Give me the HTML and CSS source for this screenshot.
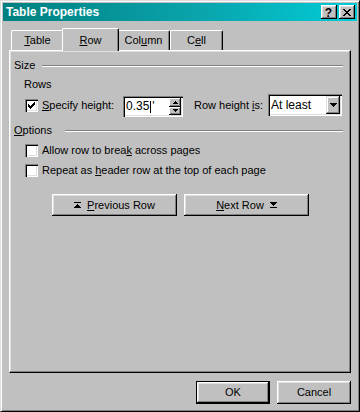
FILE: index.html
```html
<!DOCTYPE html>
<html>
<head>
<meta charset="utf-8">
<link rel="stylesheet" href="styles.css">
</head>
<body>
<div class="window">
  <div class="titlebar">
    <span class="title">Table Properties</span>
    <div class="tb-buttons">
      <span class="tb-btn help">?</span>
      <span class="tb-btn close"><svg width="8" height="7" viewBox="0 0 8 7"><path d="M0 0h2v1H0z M6 0h2v1H6z M1 1h2v1H1z M5 1h2v1H5z M2 2h4v1H2z M3 3h2v1H3z M2 4h4v1H2z M1 5h2v1H1z M5 5h2v1H5z M0 6h2v1H0z M6 6h2v1H6z" fill="#000"/></svg></span>
    </div>
  </div>
  <div class="body">
    <div class="tabs">
      <div class="tab"><u>T</u>able</div>
      <div class="tab active"><u>R</u>ow</div>
      <div class="tab">Col<u>u</u>mn</div>
      <div class="tab">C<u>e</u>ll</div>
    </div>
    <div class="panel">
      <div class="group-head"><span>Size</span><span class="etch"></span></div>
      <div class="sub">Rows</div>
      <div class="height-row">
        <span class="checkbox"><svg width="13" height="13" viewBox="0 0 13 13"><path d="M9 3h1v1H9z M8 4h2v1H8z M3 5h1v1H3z M7 5h3v1H7z M3 6h2v1H3z M6 6h3v1H6z M3 7h5v1H3z M4 8h3v1H4z M5 9h1v1H5z" fill="#000"/></svg></span>
        <span class="lbl lbl-spec"><u>S</u>pecify height:</span>
        <div class="spin">
          <span class="spin-text">0.35<span class="caret"></span>'</span>
          <div class="spin-btns">
            <span class="spin-btn"><svg width="5" height="3" viewBox="0 0 5 3"><path d="M2 0h1v1H2z M1 1h3v1H1z M0 2h5v1H0z" fill="#000"/></svg></span>
            <span class="spin-btn"><svg width="5" height="3" viewBox="0 0 5 3"><path d="M0 0h5v1H0z M1 1h3v1H1z M2 2h1v1H2z" fill="#000"/></svg></span>
          </div>
        </div>
        <span class="lbl lbl-rh">Row height <u>i</u>s:</span>
        <div class="select">
          <span class="select-text">At least</span>
          <span class="drop-btn"><svg width="7" height="4" viewBox="0 0 7 4"><path d="M0 0h7v1H0z M1 1h5v1H1z M2 2h3v1H2z M3 3h1v1H3z" fill="#000"/></svg></span>
        </div>
      </div>
      <div class="group-head opts"><span><u>O</u>ptions</span><span class="etch"></span></div>
      <div class="check-row first">
        <span class="checkbox"></span>
        <span class="lbl">Allow row to brea<u>k</u> across pages</span>
      </div>
      <div class="check-row">
        <span class="checkbox"></span>
        <span class="lbl">Repeat as <u>h</u>eader row at the top of each page</span>
      </div>
      <div class="nav-buttons">
        <div class="btn nav"><svg class="glyph" width="7" height="6" viewBox="0 0 7 6"><path d="M0 0h7v1H0z M3 2h1v1H3z M2 3h3v1H2z M1 4h5v1H1z M0 5h7v1H0z" fill="#000"/></svg><span><u>P</u>revious Row</span></div>
        <div class="btn nav"><span><u>N</u>ext Row</span><svg class="glyph" width="7" height="6" viewBox="0 0 7 6"><path d="M0 0h7v1H0z M1 1h5v1H1z M2 2h3v1H2z M3 3h1v1H3z M0 5h7v1H0z" fill="#000"/></svg></div>
      </div>
    </div>
    <div class="footer">
      <div class="btn dlg default">OK</div>
      <div class="btn dlg">Cancel</div>
    </div>
  </div>
</div>
</body>
</html>
```
FILE: styles.css
```css
* { box-sizing: border-box; }
html, body { margin: 0; padding: 0; background: #c0c0c0; }
body {
  font: 11px/13px "Liberation Sans", Arial, sans-serif;
  color: #000;
  white-space: nowrap;
}
svg { display: block; shape-rendering: crispEdges; }

.window {
  width: 360px;
  height: 412px;
  border: 1px solid;
  border-color: #dfdfdf #000 #000 #dfdfdf;
  box-shadow: inset 1px 1px #fff, inset -1px -1px #808080;
  padding: 2px;
  background: #c0c0c0;
  display: flex;
  flex-direction: column;
}

.titlebar {
  height: 18px;
  display: flex;
  align-items: center;
  justify-content: space-between;
  padding: 0 2px 0 3px;
  background: linear-gradient(to right, #008080 0%, #0aa4ac 55%, #00ccd6 100%);
}
.title { color: #fff; font-weight: bold; font-size: 12px; }
.tb-buttons { display: flex; gap: 2px; }
.tb-btn {
  width: 16px;
  height: 14px;
  background: #c0c0c0;
  box-shadow: inset -1px -1px #000, inset 1px 1px #fff, inset -2px -2px #808080, inset 2px 2px #dfdfdf;
  display: flex;
  align-items: center;
  justify-content: center;
}
.help { font-weight: bold; font-size: 12px; line-height: 12px; padding-top: 1px; padding-right: 1px; }
.close { padding-right: 1px; }

.body {
  flex: 1;
  display: flex;
  flex-direction: column;
  padding: 7px 6px 5px 6px;
}

.tabs {
  display: flex;
  align-items: flex-end;
  height: 22px;
  padding-left: 2px;
  position: relative;
  z-index: 1;
}
.tab {
  width: 53px;
  height: 20px;
  text-align: center;
  padding-top: 3px;
  background: #c0c0c0;
  border-top: 1px solid #fff;
  border-left: 1px solid #fff;
  border-right: 1px solid #000;
  box-shadow: inset -1px 0 #808080;
  border-radius: 2px 2px 0 0;
}
.tab.active {
  width: 57px;
  height: 23px;
  margin: 0 -2px -1px;
  padding-top: 5px;
  position: relative;
  z-index: 2;
}

.panel {
  flex: 1;
  border: 1px solid;
  border-color: #fff #000 #000 #fff;
  box-shadow: inset -1px -1px #808080, inset 1px 1px #dfdfdf;
  padding: 8px 7px 0 4px;
}

.group-head { display: flex; align-items: flex-start; height: 13px; }
.etch {
  flex: 1;
  height: 2px;
  margin-top: 6px;
  margin-left: 7px;
  border-top: 1px solid #808080;
  border-bottom: 1px solid #fff;
}
.group-head.opts { margin-top: 7px; }
.group-head.opts .etch { margin-left: 13px; }

.sub { margin-top: 6px; padding-left: 10px; }

.height-row {
  display: flex;
  align-items: flex-start;
  height: 23px;
  margin-top: 3px;
  padding-left: 11px;
}
.checkbox {
  width: 13px;
  height: 13px;
  flex: none;
  background: #fff;
  box-shadow: inset 1px 1px #808080, inset 2px 2px #000, inset -1px -1px #fff, inset -2px -2px #dfdfdf;
}
.height-row .checkbox { margin-top: 5px; }
.height-row .lbl { margin-top: 5px; }
.lbl-spec { margin-left: 4px; width: 81px; }
.lbl-rh { margin-left: 11px; width: 74px; }

.sunken {
  background: #fff;
}
.spin, .select {
  background: #fff;
  box-shadow: inset 1px 1px #808080, inset 2px 2px #000, inset -1px -1px #fff, inset -2px -2px #dfdfdf;
  display: flex;
  align-items: center;
  padding: 2px;
}
.spin { width: 60px; height: 21px; margin-top: 2px; }
.spin-text { flex: 1; padding-left: 1px; display: flex; align-items: center; font-size: 12px; }
.caret { width: 1px; height: 12px; background: #000; margin: 0 1px 0 1px; }
.spin-btns { display: flex; flex-direction: column; width: 12px; height: 17px; }
.spin-btn {
  flex: 1;
  background: #c0c0c0;
  box-shadow: inset -1px -1px #000, inset 1px 1px #fff, inset -2px -2px #808080;
  display: flex;
  align-items: center;
  justify-content: center;
}
.select { width: 74px; height: 22px; }
.select-text { flex: 1; padding-left: 1px; font-size: 12px; }
.drop-btn {
  width: 14px;
  height: 18px;
  background: #c0c0c0;
  box-shadow: inset -1px -1px #000, inset 1px 1px #dfdfdf, inset -2px -2px #808080, inset 2px 2px #fff;
  display: flex;
  align-items: center;
  justify-content: center;
}

.check-row {
  display: flex;
  align-items: center;
  height: 20px;
  padding-left: 11px;
  gap: 4px;
}
.check-row.first { margin-top: 3px; }

.nav-buttons {
  display: flex;
  gap: 7px;
  margin-top: 14px;
  padding-left: 38px;
}
.btn {
  background: #c0c0c0;
  box-shadow: inset -1px -1px #000, inset 1px 1px #fff, inset -2px -2px #808080, inset 2px 2px #dfdfdf;
  display: flex;
  align-items: center;
  justify-content: center;
}
.btn.nav { width: 125px; height: 22px; gap: 6px; }
.footer {
  display: flex;
  justify-content: flex-end;
  gap: 7px;
  margin-top: 8px;
}
.btn.dlg { width: 74px; height: 23px; }
.btn.default {
  border: 1px solid #000;
  box-shadow: inset -1px -1px #000, inset 1px 1px #fff, inset -2px -2px #808080, inset 2px 2px #dfdfdf;
}
```
